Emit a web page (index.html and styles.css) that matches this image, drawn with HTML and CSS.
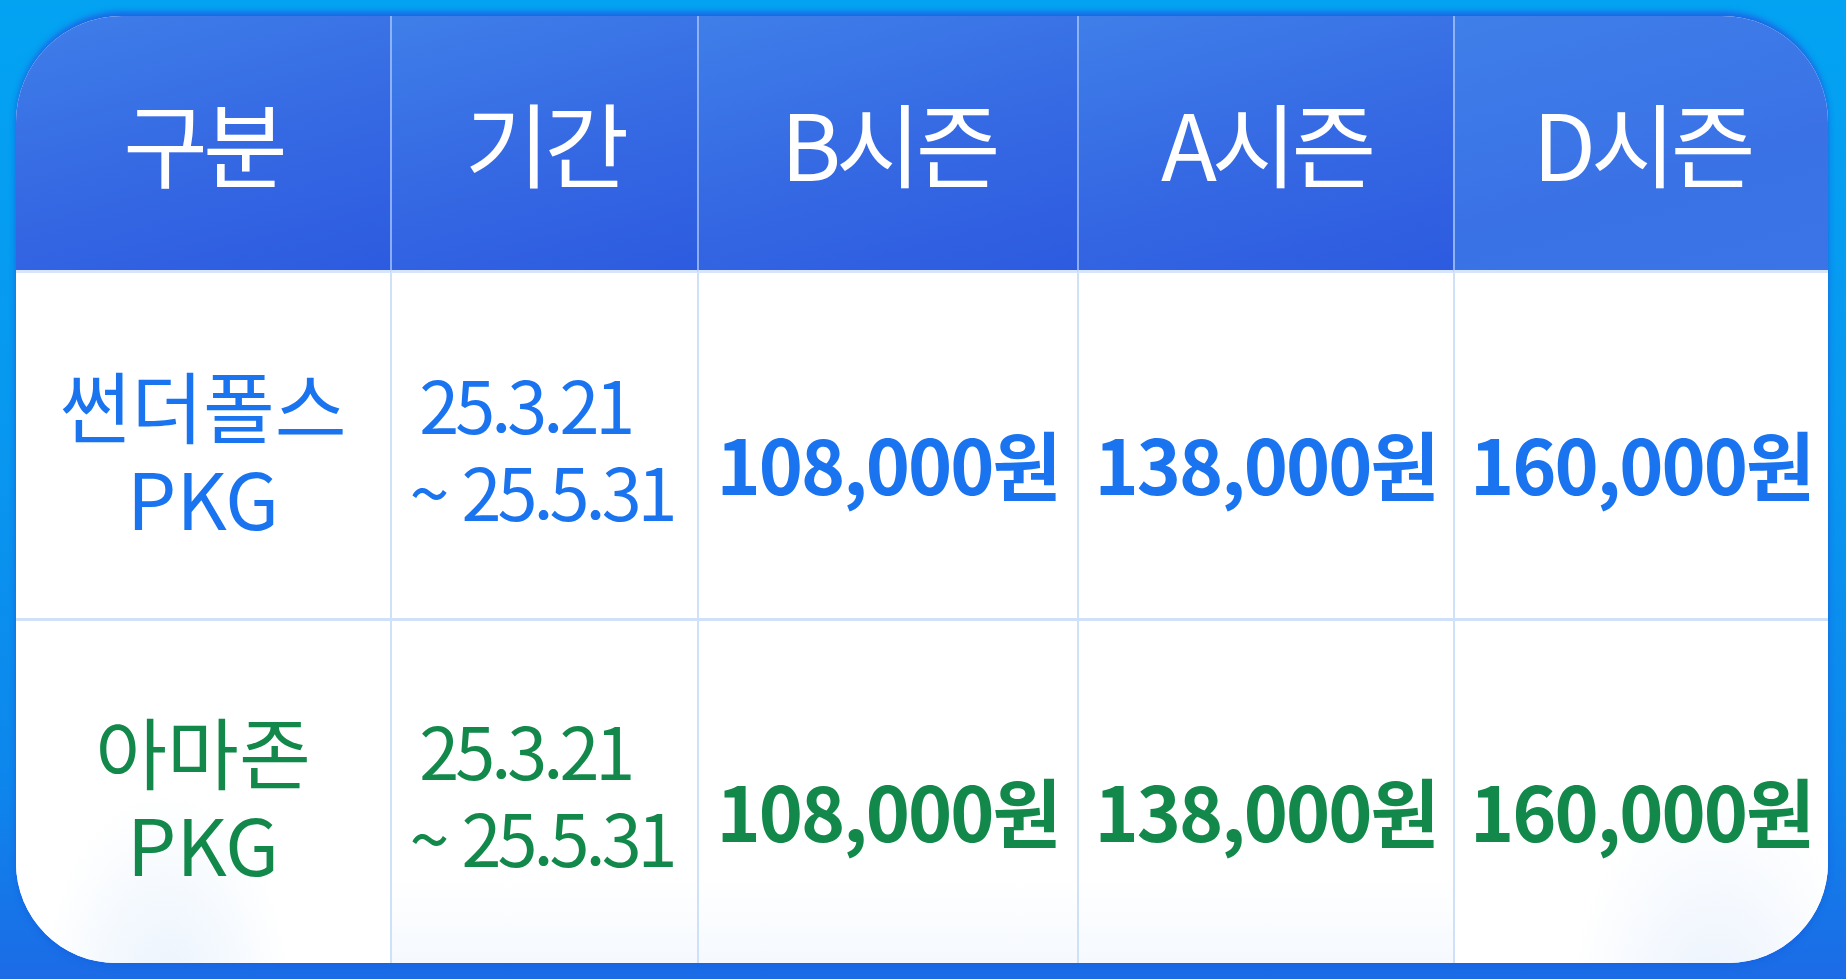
FILE: index.html
```html
<!DOCTYPE html>
<html lang="ko">
<head>
<meta charset="utf-8">
<title>요금표</title>
<link rel="stylesheet" href="styles.css">
</head>
<body>
<div class="page">
  <div class="card">
    <div class="cell head">구분</div>
    <div class="cell head">기간</div>
    <div class="cell head">B시즌</div>
    <div class="cell head">A시즌</div>
    <div class="cell head last">D시즌</div>

    <div class="cell body blue name">썬더폴스<br>PKG</div>
    <div class="cell body blue date">25.3.21&nbsp;&nbsp;<br>~ 25.5.31</div>
    <div class="cell body blue price">108,000원</div>
    <div class="cell body blue price">138,000원</div>
    <div class="cell body blue price">160,000원</div>

    <div class="cell body green name bottom">아마존<br>PKG</div>
    <div class="cell body green date bottom">25.3.21&nbsp;&nbsp;<br>~ 25.5.31</div>
    <div class="cell body green price bottom">108,000원</div>
    <div class="cell body green price bottom">138,000원</div>
    <div class="cell body green price bottom">160,000원</div>
  </div>
</div>
</body>
</html>
```

FILE: styles.css
```css
* { box-sizing: border-box; }
html, body { margin: 0; padding: 0; }
body {
  width: 1846px;
  height: 979px;
  overflow: hidden;
  background: linear-gradient(180deg, #03a3f2 0%, #0897f0 45%, #0d86ec 80%, #1c6be6 100%);
  font-family: "Noto Sans CJK KR", "Noto Sans", sans-serif;
}
.page {
  padding: 16px 18px 16px 16px;
}
.card {
  display: grid;
  grid-template-columns: 374px 307px 380px 376px 375px;
  grid-template-rows: 257px 345px 345px;
  width: 1812px;
  border-radius: 106px 106px 100px 100px;
  overflow: hidden;
  background: #ffffff;
  box-shadow: 0 -5px 6px -1px #1d63e4, 0 4px 6px rgba(20, 90, 220, 0.35);
}
.cell {
  display: flex;
  align-items: center;
  justify-content: center;
  text-align: center;
}
.head {
  background: linear-gradient(165deg, #3f7fe9 0%, #3568e3 55%, #2d5be0 100%);
  color: #ffffff;
  font-size: 92px;
  font-weight: 400;
  letter-spacing: -5px;
  line-height: 1;
  border-left: 2px solid rgba(170, 200, 250, 0.75);
  border-bottom: 3px solid #d6e5fb;
  padding-bottom: 4px;
}
.head:first-child { border-left: none; }
.head.last {
  background: linear-gradient(165deg, #3f7fe9 0%, #3a72e6 60%, #3a74e6 100%);
}
.body {
  border-left: 2px solid #cfe1f8;
  background: #ffffff;
}
.body.name { border-left: none; }
.bottom {
  border-top: 3px solid #cfe1f8;
  background: linear-gradient(180deg, #ffffff 75%, #f5f9fe 100%);
}
.body.name.bottom {
  background: radial-gradient(ellipse at 40% 115%, #e8f2fd 0%, #ffffff 40%);
}
.body.price.bottom:last-child {
  background: radial-gradient(ellipse at 70% 115%, #eaf2fd 0%, #ffffff 40%);
}
.name {
  font-size: 78px;
  line-height: 92px;
  letter-spacing: 0;
  padding-top: 8px;
}
.date {
  font-size: 72px;
  line-height: 87px;
  letter-spacing: -4px;
  padding-right: 6px;
}
.price {
  font-size: 75px;
  font-weight: 700;
  letter-spacing: -2px;
  line-height: 1;
  padding-top: 34px;
}
.blue { color: #1a74f0; }
.green { color: #12894b; }
```
